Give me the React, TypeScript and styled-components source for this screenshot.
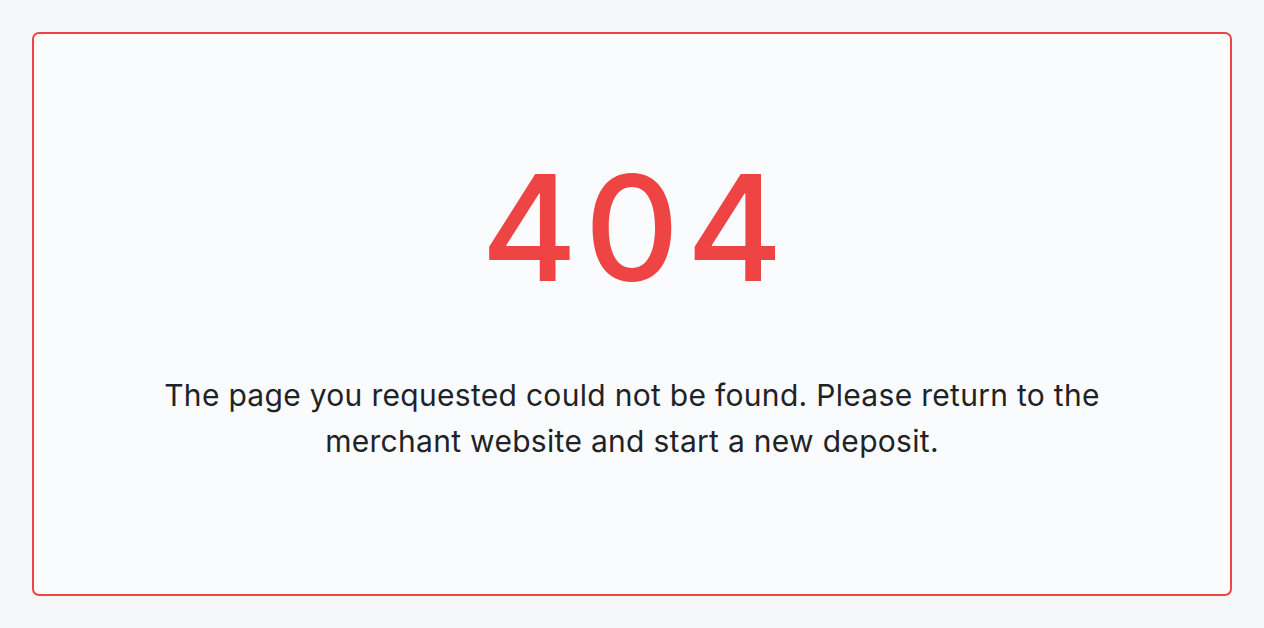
import React from 'react'
import styled, { createGlobalStyle } from 'styled-components'

const GlobalStyle = createGlobalStyle`
  html, body {
    margin: 0;
    padding: 0;
    background: #f5f6f7;
    font-family: Inter, "Noto Sans", sans-serif;
  }
`

const Page = styled.div`
  box-sizing: border-box;
  height: 628px;
  padding: 32px;
  display: flex;
`

const Card = styled.div`
  flex: 1;
  box-sizing: border-box;
  border: 2px solid #ef4444;
  border-radius: 7px;
  background: #fafbfd;
  display: flex;
  flex-direction: column;
  align-items: center;
  justify-content: center;
  padding: 0 40px 16px;
`

const Code = styled.h1`
  margin: 0;
  font-size: 147px;
  line-height: 160px;
  font-weight: 500;
  color: #ef4444;
  letter-spacing: 7px;
  text-indent: 7px;
`

const Message = styled.p`
  margin: 64px 0 0;
  max-width: 960px;
  text-align: center;
  font-size: 30px;
  line-height: 46px;
  letter-spacing: 0.3px;
  color: #1f2328;
`

export default function App() {
  return (
    <>
      <GlobalStyle />
      <Page>
        <Card>
          <Code>404</Code>
          <Message>
            The page you requested could not be found. Please return to the merchant website and start a new deposit.
          </Message>
        </Card>
      </Page>
    </>
  )
}
